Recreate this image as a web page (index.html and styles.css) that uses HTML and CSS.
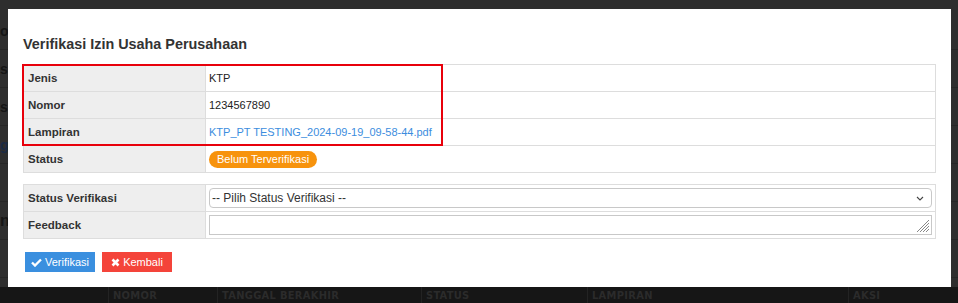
FILE: index.html
```html
<!DOCTYPE html>
<html>
<head>
<meta charset="utf-8">
<link rel="stylesheet" href="styles.css">
</head>
<body>
<div class="page">
  <div class="bg-rows">
    <div class="bg-row"><span>oo</span></div>
    <div class="bg-row"><span>s</span></div>
    <div class="bg-row"><span>s F</span></div>
    <div class="bg-row"><span class="blue">g c</span></div>
    <div class="bg-row"></div>
    <div class="bg-row"><span class="big">na</span></div>
    <div class="bg-row"></div>
  </div>
  <div class="bg-thead">
    <div class="th c0"></div>
    <div class="th c1">NOMOR</div>
    <div class="th c2">TANGGAL BERAKHIR</div>
    <div class="th c3">STATUS</div>
    <div class="th c4">LAMPIRAN</div>
    <div class="th c5">AKSI</div>
  </div>
</div>

<div class="modal">
  <h4 class="modal-title">Verifikasi Izin Usaha Perusahaan</h4>
  <div class="tbl-wrap">
    <table class="tbl">
      <tr><th>Jenis</th><td>KTP</td></tr>
      <tr><th>Nomor</th><td>1234567890</td></tr>
      <tr><th>Lampiran</th><td><a class="link" href="#">KTP_PT TESTING_2024-09-19_09-58-44.pdf</a></td></tr>
      <tr><th>Status</th><td><span class="badge">Belum Terverifikasi</span></td></tr>
    </table>
    <div class="highlight"></div>
  </div>
  <table class="tbl tbl2">
    <tr><th>Status Verifikasi</th><td class="ctl"><div class="select"><span>-- Pilih Status Verifikasi --</span><svg width="8" height="5" viewBox="0 0 8 5"><path d="M1 1 L4 4 L7 1" fill="none" stroke="#444" stroke-width="1.1"/></svg></div></td></tr>
    <tr><th>Feedback</th><td class="ctl"><div class="textarea"><svg class="grip" width="14" height="14" viewBox="0 0 14 14"><path d="M13 1 L1 13 M13 4 L4 13 M13 7 L7 13 M13 10 L10 13" stroke="#888" stroke-width="1"/></svg></div></td></tr>
  </table>
  <div class="actions">
    <button class="btn btn-blue"><svg width="11" height="9" viewBox="0 0 11 9"><path d="M1 4.5 L4 7.5 L10 1.5" fill="none" stroke="#fff" stroke-width="2.4"/></svg>Verifikasi</button>
    <button class="btn btn-red"><svg width="9" height="9" viewBox="0 0 9 9"><path d="M1.5 1.5 L7.5 7.5 M7.5 1.5 L1.5 7.5" fill="none" stroke="#fff" stroke-width="2.6"/></svg>Kembali</button>
  </div>
</div>
</body>
</html>
```
FILE: styles.css
```css
html, body {
  margin: 0;
  padding: 0;
  height: 100%;
  overflow: hidden;
}
body {
  background: #2e2e2e;
  font-family: "Liberation Sans", Arial, sans-serif;
  position: relative;
}
.page {
  height: 303px;
  display: flex;
  flex-direction: column;
}
.bg-rows {
  flex: 1;
  display: flex;
  flex-direction: column;
  padding-top: 12px;
}
.bg-row {
  height: 37px;
  border-bottom: 1px solid #262626;
  font-size: 14px;
  display: flex;
  align-items: center;
}
.bg-row span { color: #151515; font-weight: 600; }
.bg-row .blue { color: #1a2a44; }
.bg-row .big { font-size: 16px; font-weight: 700; }
.bg-thead {
  height: 16px;
  background: #161616;
  display: flex;
  font-family: "DejaVu Sans Condensed", "Liberation Sans", sans-serif;
  font-weight: 700;
  font-size: 11px;
  color: #2b2b2b;
  letter-spacing: 0.3px;
}
.th {
  border-left: 1px solid #232323;
  padding: 3px 0 0 4px;
  line-height: 12px;
  overflow: hidden;
  box-sizing: border-box;
}
.c0 { width: 108px; border-left: none; }
.c1 { width: 109px; }
.c2 { width: 204px; }
.c3 { width: 166px; }
.c4 { width: 261px; }
.c5 { flex: 1; }

.modal {
  position: absolute;
  left: 8px;
  top: 9px;
  width: 943px;
  height: 278px;
  background: #fff;
  box-sizing: border-box;
  padding: 0 15px;
  color: #333;
}
.modal-title {
  margin: 0;
  padding: 28px 0 12px;
  font-size: 14.4px;
  line-height: 15px;
  font-weight: 700;
  color: #333;
}
.tbl-wrap {
  position: relative;
}
.tbl {
  width: 100%;
  border-collapse: collapse;
  font-size: 11px;
}
.tbl th, .tbl td {
  border: 1px solid #ddd;
  height: 27px;
  padding: 0 3px;
  box-sizing: border-box;
  text-align: left;
  vertical-align: middle;
}
.tbl th {
  width: 182px;
  background: #eee;
  font-weight: 700;
  color: #333;
  padding-left: 4px;
  font-size: 11.5px;
}
.tbl td { color: #222; }
.link { color: #3c8dde; text-decoration: none; }
.badge {
  display: inline-block;
  background: #f7930d;
  color: #fff;
  border-radius: 9px;
  font-size: 11px;
  line-height: 17px;
  padding: 0 8px;
}
.highlight {
  position: absolute;
  left: -1px;
  top: 0;
  width: 421px;
  height: 82px;
  border: 2px solid #e8000b;
  box-sizing: border-box;
  pointer-events: none;
}
.tbl2 { margin-top: 11px; }
.ctl { padding: 3px 3px; }
.select {
  height: 20px;
  border: 1px solid #c8c8c8;
  border-radius: 4px;
  box-sizing: border-box;
  display: flex;
  align-items: center;
  justify-content: space-between;
  padding: 0 7px 0 2px;
  font-size: 12px;
  color: #333;
}
.textarea {
  height: 20px;
  border: 1px solid #c8c8c8;
  box-sizing: border-box;
  display: flex;
  justify-content: flex-end;
  align-items: flex-end;
}
.grip { display: block; margin: 0 1px 1px 0; }
.actions {
  display: flex;
  gap: 7px;
  padding-top: 13px;
  padding-left: 2px;
}
.btn {
  border: none;
  height: 20px;
  padding: 0 6px;
  color: #fff;
  font-family: "Liberation Sans", Arial, sans-serif;
  font-size: 11px;
  display: flex;
  align-items: center;
  gap: 3px;
  cursor: pointer;
}
.btn-blue { background: #3a8fdf; width: 70px; }
.btn-red { background: #f4443a; width: 70px; justify-content: center; }
```
